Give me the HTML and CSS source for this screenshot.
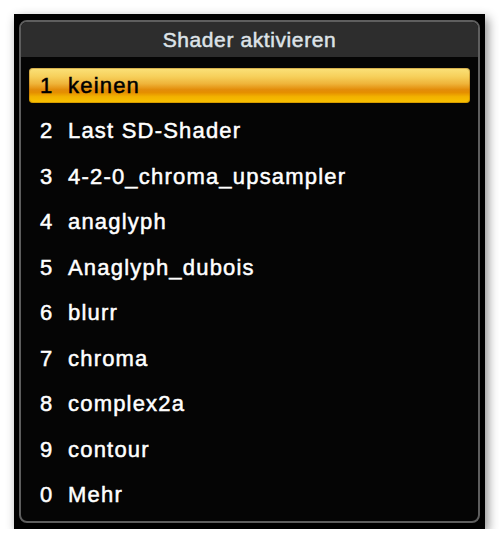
FILE: index.html
```html
<!DOCTYPE html>
<html>
<head>
<meta charset="utf-8">
<link rel="stylesheet" href="styles.css">
</head>
<body>
<div class="window">
  <div class="panel">
    <div class="header">Shader aktivieren</div>
    <ul class="list">
      <li class="item active"><span class="num">1</span><span class="label">keinen</span></li>
      <li class="item"><span class="num">2</span><span class="label">Last SD-Shader</span></li>
      <li class="item"><span class="num">3</span><span class="label">4-2-0_chroma_upsampler</span></li>
      <li class="item"><span class="num">4</span><span class="label">anaglyph</span></li>
      <li class="item"><span class="num">5</span><span class="label">Anaglyph_dubois</span></li>
      <li class="item"><span class="num">6</span><span class="label">blurr</span></li>
      <li class="item"><span class="num">7</span><span class="label">chroma</span></li>
      <li class="item"><span class="num">8</span><span class="label">complex2a</span></li>
      <li class="item"><span class="num">9</span><span class="label">contour</span></li>
      <li class="item"><span class="num">0</span><span class="label">Mehr</span></li>
    </ul>
  </div>
</div>
</body>
</html>
```

FILE: styles.css
```css
html, body {
  margin: 0;
  padding: 0;
  background: #ffffff;
}

body {
  padding: 14px 0 0 14px;
  font-family: "Liberation Sans", Arial, sans-serif;
}

.window {
  width: 471px;
  height: 515px;
  box-sizing: border-box;
  background: #000000;
  padding: 6px 5px 6px 5px;
  box-shadow: 3px 4px 10px rgba(0, 0, 0, 0.45);
}

.panel {
  height: 100%;
  box-sizing: border-box;
  border: 2px solid #5e5e5e;
  border-radius: 8px;
  background: #050505;
  overflow: hidden;
}

.header {
  height: 35px;
  line-height: 35px;
  background: #2d2d2d;
  color: #dde3e8;
  text-align: center;
  font-size: 21px;
  letter-spacing: 0.6px;
  -webkit-text-stroke: 0.5px #dde3e8;
}

.list {
  list-style: none;
  margin: 0;
  padding: 11px 8px 0 8px;
  display: flex;
  flex-direction: column;
  gap: 10.5px;
}

.item {
  height: 35px;
  display: flex;
  align-items: center;
  padding-left: 11px;
  border-radius: 4px;
  color: #ffffff;
  font-size: 22px;
  letter-spacing: 1.2px;
  -webkit-text-stroke: 0.5px #ffffff;
}

.num {
  width: 28px;
  flex: none;
}

.item.active {
  color: #000000;
  -webkit-text-stroke: 0.5px #000000;
  background: linear-gradient(to bottom,
    #fbe27a 0%,
    #f6cf5a 25%,
    #efb43a 45%,
    #e38c0a 62%,
    #e58f00 70%,
    #f2b200 82%,
    #f9c300 100%);
  box-shadow: inset 0 0 0 1px rgba(150, 90, 0, 0.35);
}
```
